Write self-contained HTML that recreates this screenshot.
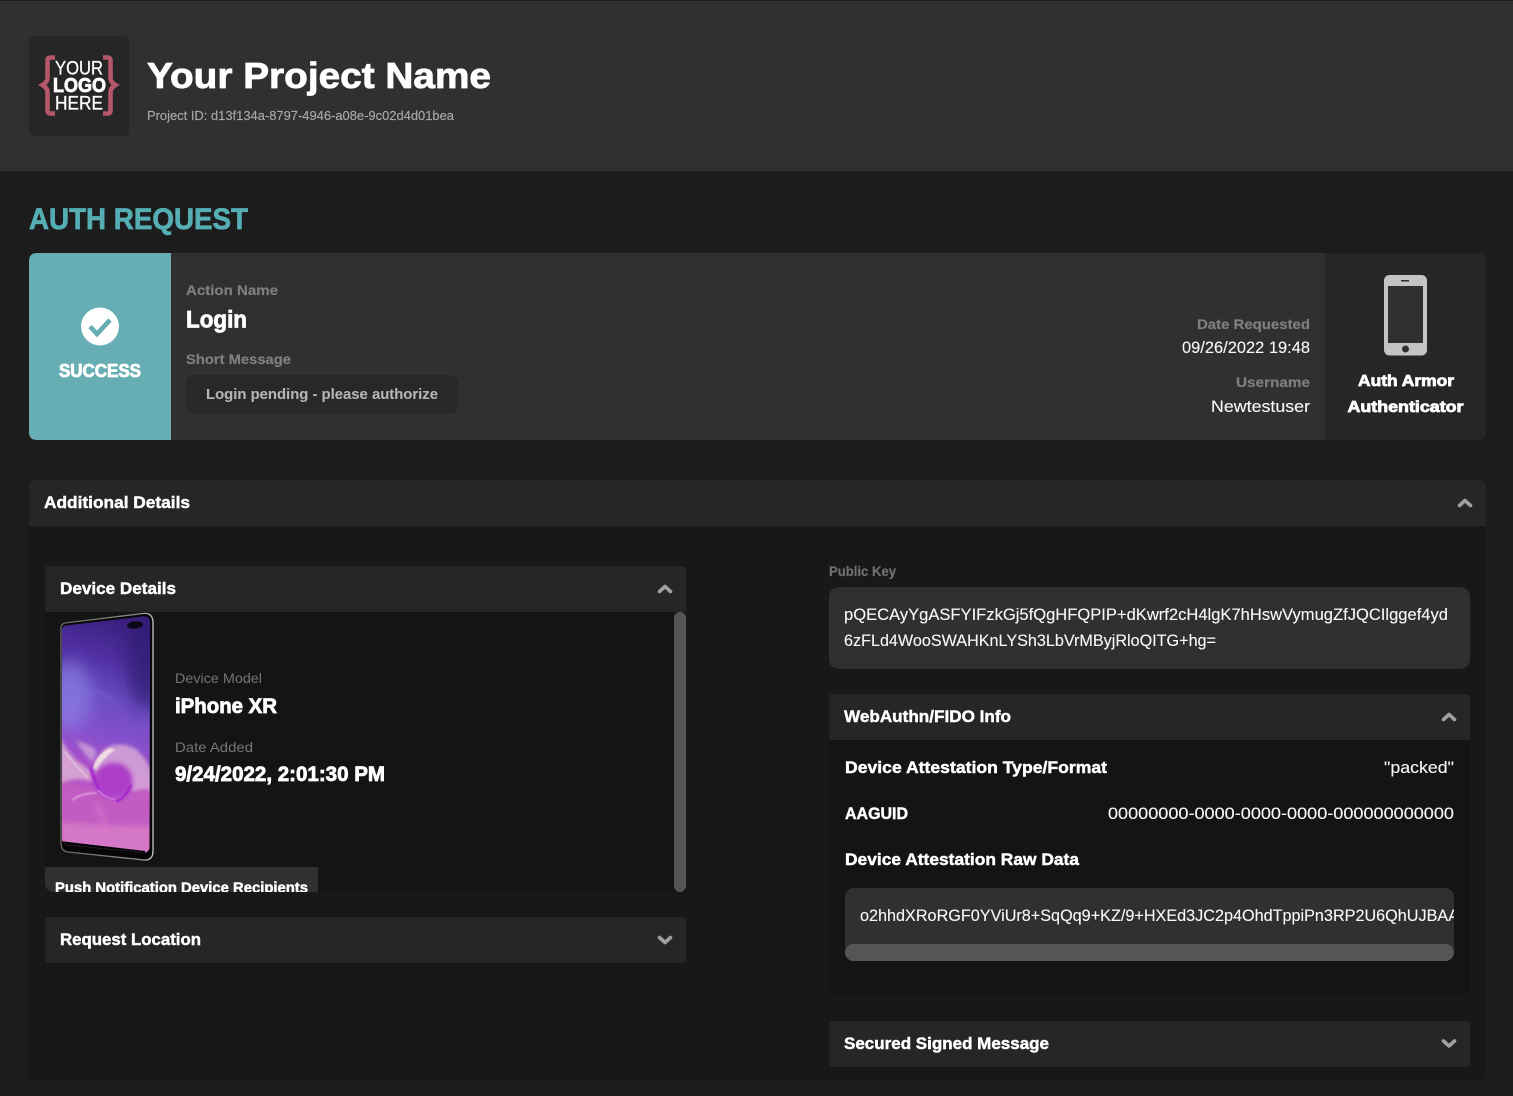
<!DOCTYPE html>
<html lang="en">
<head>
<meta charset="utf-8">
<title>Auth Request</title>
<style>
html,body{margin:0;padding:0;background:#1d1c1d;width:1513px;height:1096px;overflow:hidden}
svg{display:block}
text{font-family:"Liberation Sans",sans-serif;fill:#fff}
.b{font-weight:700;stroke:#fff;stroke-width:.45px}
.xb{font-weight:700;stroke:#fff;stroke-width:.8px}
.l{font-weight:700;fill:#7f7f7f;font-size:14px;stroke:#7f7f7f;stroke-width:.2px}
.d{fill:#757575;font-size:14px}
.v{font-size:17px;fill:#f8f8f8;stroke:#f8f8f8;stroke-width:.12px}
.h{font-weight:700;font-size:17px;stroke:#fff;stroke-width:.45px}
.c{fill:none;stroke:#a0a0a0;stroke-width:3.6;stroke-linecap:round;stroke-linejoin:round}
</style>
</head>
<body>
<svg width="1513" height="1096" viewBox="0 0 1513 1096" xmlns="http://www.w3.org/2000/svg">
<defs>
<clipPath id="rawclip"><rect x="845" y="888" width="609" height="56"/></clipPath>
<clipPath id="pushclip"><rect x="45" y="867" width="273" height="25"/></clipPath>
<clipPath id="screen"><path d="M62 630Q62 626 66 625.500L142 616.500Q150 615.500 150 623L149.500 846Q149.500 853 143 852.500L68 845Q62 844 62 838Z"/></clipPath>
<linearGradient id="scr" x1=".15" y1="0" x2=".05" y2="1">
<stop offset="0" stop-color="#3d2182"/>
<stop offset=".14" stop-color="#4f2fa0"/>
<stop offset=".3" stop-color="#6a4cc0"/>
<stop offset=".46" stop-color="#8650cc"/>
<stop offset=".62" stop-color="#b04fc8"/>
<stop offset=".8" stop-color="#c560c2"/>
<stop offset="1" stop-color="#d67cc6"/>
</linearGradient>
<linearGradient id="fr" x1="0" y1="0" x2="1" y2="0">
<stop offset="0" stop-color="#6a6a68"/>
<stop offset=".85" stop-color="#8a8a86"/>
<stop offset="1" stop-color="#c8c8c2"/>
</linearGradient>
<filter id="bl" x="-30%" y="-30%" width="160%" height="160%"><feGaussianBlur stdDeviation=".8"/></filter>
<filter id="bl1" x="-30%" y="-30%" width="160%" height="160%"><feGaussianBlur stdDeviation="1.800"/></filter>
<filter id="bl2" x="-40%" y="-40%" width="180%" height="180%"><feGaussianBlur stdDeviation="3"/></filter>
<filter id="bl3" x="-60%" y="-60%" width="220%" height="220%"><feGaussianBlur stdDeviation="8"/></filter>
</defs>

<rect width="1513" height="1096" fill="#1d1c1d"/>
<rect y="1" width="1513" height="170" fill="#303030"/>

<!-- logo -->
<rect x="29" y="36" width="100" height="100" rx="6" fill="#262626"/>
<path d="M55 57.500H50.500Q47.500 57.500 47.500 60.500V78Q47.500 82 42.500 85Q47.500 88 47.500 92V110.500Q47.500 113.500 50.500 113.500H55" fill="none" stroke="#b5566a" stroke-width="4.600"/>
<path d="M103 57.500H107.500Q110.500 57.500 110.500 60.500V78Q110.500 82 115.500 85Q110.500 88 110.500 92V110.500Q110.500 113.500 107.500 113.500H103" fill="none" stroke="#b5566a" stroke-width="4.600"/>
<text x="55" y="74.500" font-size="19.500" textLength="48" lengthAdjust="spacingAndGlyphs" style="stroke:#fff;stroke-width:.25px">YOUR</text>
<text x="53" y="92" font-size="20" class="xb" textLength="53" lengthAdjust="spacingAndGlyphs">LOGO</text>
<text x="55" y="109.500" font-size="19.500" textLength="48" lengthAdjust="spacingAndGlyphs" style="stroke:#fff;stroke-width:.25px">HERE</text>

<text x="147" y="88" font-size="36" class="xb" textLength="344" lengthAdjust="spacingAndGlyphs">Your Project Name</text>
<text x="147" y="120" font-size="12.500" style="fill:#a8a8a8;stroke:#a8a8a8;stroke-width:.15px" textLength="307" lengthAdjust="spacingAndGlyphs">Project ID: d13f134a-8797-4946-a08e-9c02d4d01bea</text>

<text x="29" y="229" font-size="30" font-weight="700" style="fill:#55aeb3;stroke:#55aeb3;stroke-width:.7px" textLength="219" lengthAdjust="spacingAndGlyphs">AUTH REQUEST</text>

<!-- request card -->
<path d="M37 253H1478Q1486 253 1486 261V432Q1486 440 1478 440H37Q29 440 29 432V261Q29 253 37 253Z" fill="#303030"/>
<path d="M37 253H171V440H37Q29 440 29 432V261Q29 253 37 253Z" fill="#66aeb3"/>
<path d="M1325 253H1478Q1486 253 1486 261V432Q1486 440 1478 440H1325Z" fill="#262626"/>
<circle cx="100" cy="326.500" r="19" fill="#fff"/>
<path d="M90 326.500L97 334L110 320" fill="none" stroke="#66aeb3" stroke-width="4.600"/>
<text x="59" y="377" font-size="18" class="xb" textLength="82" lengthAdjust="spacingAndGlyphs">SUCCESS</text>
<text x="186" y="295" class="l" textLength="92" lengthAdjust="spacingAndGlyphs">Action Name</text>
<text x="186" y="327.500" font-size="24" class="xb" textLength="61" lengthAdjust="spacingAndGlyphs">Login</text>
<text x="186" y="364" class="l" textLength="105" lengthAdjust="spacingAndGlyphs">Short Message</text>
<rect x="186" y="375" width="272" height="39" rx="8" fill="#282828"/>
<text x="206" y="399" font-size="15" font-weight="700" style="fill:#b4b4b4;stroke:#b4b4b4;stroke-width:.1px" textLength="232" lengthAdjust="spacingAndGlyphs">Login pending - please authorize</text>
<text x="1197" y="329" class="l" textLength="113" lengthAdjust="spacingAndGlyphs">Date Requested</text>
<text x="1182" y="353" class="v" textLength="128" lengthAdjust="spacingAndGlyphs">09/26/2022 19:48</text>
<text x="1236" y="387" class="l" textLength="74" lengthAdjust="spacingAndGlyphs">Username</text>
<text x="1211" y="412" class="v" textLength="99" lengthAdjust="spacingAndGlyphs">Newtestuser</text>
<rect x="1384" y="275" width="43" height="80.500" rx="5.500" fill="#c4c4c4"/>
<rect x="1388" y="286" width="35" height="57" fill="#303030"/>
<rect x="1401" y="280" width="8" height="1.500" fill="#303030"/>
<circle cx="1405.500" cy="349" r="3.500" fill="#303030"/>
<text x="1358" y="386" font-size="16" class="xb" textLength="96" lengthAdjust="spacingAndGlyphs">Auth Armor</text>
<text x="1347.500" y="412" font-size="16" class="xb" textLength="116" lengthAdjust="spacingAndGlyphs">Authenticator</text>

<!-- additional details -->
<path d="M29 526V488Q29 480 37 480H1478Q1486 480 1486 488V526Z" fill="#262626"/>
<path d="M29 526H1486V1073Q1486 1081 1478 1081H37Q29 1081 29 1073Z" fill="#181818"/>
<text x="44" y="508" class="h" textLength="146" lengthAdjust="spacingAndGlyphs">Additional Details</text>
<path class="c" d="M1459.500 505.500L1465 500.500L1470.500 505.500"/>

<!-- device details -->
<path d="M45 612V570Q45 566 49 566H682Q686 566 686 570V612Z" fill="#262626"/>
<path d="M45 612H686V892H55Q45 892 45 882Z" fill="#141414"/>
<text x="60" y="594" class="h" textLength="116" lengthAdjust="spacingAndGlyphs">Device Details</text>
<path class="c" d="M659.500 591.500L665 586.500L670.500 591.500"/>
<rect x="674" y="612" width="12" height="280" rx="6" fill="#555"/>

<!-- phone picture -->
<path d="M61 628Q61 624 65 623L143 613.500Q152.500 612.500 153 622L153 851Q153 860.500 144 860L68 852Q61 851 61 843Z" fill="#060606" stroke="url(#fr)" stroke-width="1.300"/>
<g clip-path="url(#screen)">
<rect x="60" y="612" width="94" height="250" fill="url(#scr)"/>
<ellipse cx="70" cy="696" rx="22" ry="34" fill="#8f88ea" opacity=".6" filter="url(#bl3)"/>
<ellipse cx="145" cy="660" rx="18" ry="50" fill="#2f1a70" opacity=".7" filter="url(#bl3)"/>
<path d="M95 690Q105 695 112 700" fill="none" stroke="#9c90e8" stroke-width="1.500" opacity=".4" filter="url(#bl1)"/>
<!-- lower pink field -->
<path d="M58 785Q90 782 118 800Q135 792 154 778V860H58Z" fill="#c25cc2" filter="url(#bl2)"/>
<path d="M60 822Q105 826 152 826V860H60Z" fill="#d97fc8" opacity=".8" filter="url(#bl2)"/>
<path d="M95 805Q110 820 100 835" fill="none" stroke="#d878c8" stroke-width="8" opacity=".5" filter="url(#bl2)"/>
<!-- pale swirl -->
<path d="M60 738Q68 752 76 760Q84 766 90 770L92 782Q76 776 60 784Z" fill="#dcaed4" opacity=".85" filter="url(#bl1)"/>
<path d="M65 752Q76 766 88 778" fill="none" stroke="#eed9dc" stroke-width="1.200" opacity=".8" filter="url(#bl)"/>
<path d="M76 741Q88 743 96 750Q96 758 92 762Q84 754 76 741Z" fill="#d2a8dc" opacity=".75" filter="url(#bl1)"/>
<path d="M94 772Q96 752 110 746Q124 742 136 749Q146 758 152 772V790Q142 788 132 792Q132 772 120 766Q108 762 100 776Z" fill="#d8a8d6" opacity=".85" filter="url(#bl1)"/>
<path d="M93 768Q96 755 110 748L115 750Q103 757 97 771Z" fill="#f2e2e4" opacity=".95" filter="url(#bl)"/>
<ellipse cx="113" cy="780" rx="19" ry="17" fill="#ad3cc8" filter="url(#bl2)"/>
<path d="M90 767Q94 778 97 786Q102 796 118 801Q126 797 131 785" fill="none" stroke="#a11fd0" stroke-width="2" filter="url(#bl)"/>
<path d="M98 790Q106 798 116 800" fill="none" stroke="#e8c2ec" stroke-width=".9" filter="url(#bl)"/>
<path d="M72 800Q82 793 96 793" fill="none" stroke="#dc9ad8" stroke-width="2" filter="url(#bl)"/>
<!-- black chin -->
<path d="M60 841L145 851V862H60Z" fill="#050505"/>
</g>
<ellipse cx="135" cy="625" rx="8" ry="3.800" transform="rotate(-5 135 625)" fill="#0c0a18"/>

<text x="175" y="683" class="d" textLength="87" lengthAdjust="spacingAndGlyphs">Device Model</text>
<text x="175" y="713" font-size="21" class="xb" textLength="102" lengthAdjust="spacingAndGlyphs">iPhone XR</text>
<text x="175" y="752" class="d" textLength="78" lengthAdjust="spacingAndGlyphs">Date Added</text>
<text x="175" y="781" font-size="21" class="xb" textLength="210" lengthAdjust="spacingAndGlyphs">9/24/2022, 2:01:30 PM</text>
<path d="M45 867H318V892H55Q45 892 45 882Z" fill="#303030"/>
<g clip-path="url(#pushclip)">
<text x="55" y="892.500" font-size="14.500" class="b" textLength="253" lengthAdjust="spacingAndGlyphs">Push Notification Device Recipients</text>
</g>

<!-- request location -->
<rect x="45" y="917" width="641" height="46" rx="4" fill="#262626"/>
<text x="60" y="945" class="h" textLength="141" lengthAdjust="spacingAndGlyphs">Request Location</text>
<path class="c" d="M659.500 937.500L665 942.500L670.500 937.500"/>

<!-- public key -->
<text x="829" y="576" font-size="13.500" font-weight="700" style="fill:#707070;stroke:#707070;stroke-width:.2px" textLength="67" lengthAdjust="spacingAndGlyphs">Public Key</text>
<rect x="829" y="587" width="641" height="82" rx="10" fill="#303030"/>
<text x="844" y="620" class="v" textLength="604" lengthAdjust="spacingAndGlyphs">pQECAyYgASFYIFzkGj5fQgHFQPIP+dKwrf2cH4lgK7hHswVymugZfJQCIlggef4yd</text>
<text x="844" y="646" class="v" textLength="372" lengthAdjust="spacingAndGlyphs">6zFLd4WooSWAHKnLYSh3LbVrMByjRloQITG+hg=</text>

<!-- webauthn -->
<path d="M829 740V698Q829 694 833 694H1466Q1470 694 1470 698V740Z" fill="#262626"/>
<path d="M829 740H1470V987Q1470 995 1462 995H837Q829 995 829 987Z" fill="#141414"/>
<text x="844" y="722" class="h" textLength="167" lengthAdjust="spacingAndGlyphs">WebAuthn/FIDO Info</text>
<path class="c" d="M1443.500 719.500L1449 714.500L1454.500 719.500"/>
<text x="845" y="773" class="h" textLength="262" lengthAdjust="spacingAndGlyphs">Device Attestation Type/Format</text>
<text x="1384" y="773" class="v" textLength="70" lengthAdjust="spacingAndGlyphs">"packed"</text>
<text x="845" y="819" class="h" textLength="63" lengthAdjust="spacingAndGlyphs">AAGUID</text>
<text x="1108" y="819" class="v" textLength="346" lengthAdjust="spacingAndGlyphs">00000000-0000-0000-0000-000000000000</text>
<text x="845" y="865" class="h" textLength="234" lengthAdjust="spacingAndGlyphs">Device Attestation Raw Data</text>
<rect x="845" y="888" width="609" height="73" rx="9" fill="#303030"/>
<g clip-path="url(#rawclip)">
<text x="860" y="921" class="v" textLength="599" lengthAdjust="spacingAndGlyphs">o2hhdXRoRGF0YViUr8+SqQq9+KZ/9+HXEd3JC2p4OhdTppiPn3RP2U6QhUJBAA</text>
</g>
<rect x="845" y="944" width="609" height="17" rx="8.500" fill="#555"/>

<!-- secured signed message -->
<rect x="829" y="1021" width="641" height="46" rx="4" fill="#262626"/>
<text x="844" y="1049" class="h" textLength="205" lengthAdjust="spacingAndGlyphs">Secured Signed Message</text>
<path class="c" d="M1443.500 1041L1449 1046L1454.500 1041"/>
</svg>
</body>
</html>
